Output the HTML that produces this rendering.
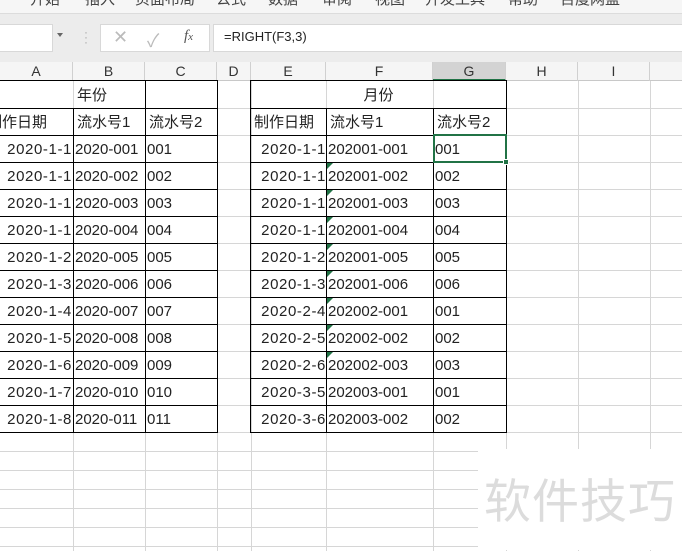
<!DOCTYPE html>
<html><head><meta charset="utf-8"><style>
*{margin:0;padding:0;box-sizing:border-box}
body{width:682px;height:550px;overflow:hidden;background:#fff;position:relative;font-family:"Liberation Sans","Noto Sans CJK SC",sans-serif;}
.a{position:absolute}
.t{font-size:15px;color:#222;line-height:29px;white-space:nowrap}
.vl{position:absolute;width:1px;background:#d6d6d6}
.hl{position:absolute;height:1px;background:#d6d6d6}
.ch{position:absolute;top:62px;height:19px;font-size:14px;color:#333;text-align:center;line-height:19px;border-right:1px solid #d0d0d0}
.tri{position:absolute;width:0;height:0;border-top:6px solid #217346;border-right:6px solid transparent}
</style></head><body>
<div class="a" style="left:0;top:0;width:682px;height:62px;background:#ececec"></div>
<div class="a" style="left:0;top:0;width:682px;height:14px;background:#f6f6f6;border-bottom:1px solid #dcdcdc;overflow:hidden;font-size:15px;color:#444">
<span class="a" style="left:30px;top:-12px">开始</span><span class="a" style="left:85px;top:-12px">插入</span><span class="a" style="left:135px;top:-12px">页面布局</span><span class="a" style="left:216px;top:-12px">公式</span><span class="a" style="left:268px;top:-12px">数据</span><span class="a" style="left:322px;top:-12px">审阅</span><span class="a" style="left:375px;top:-12px">视图</span><span class="a" style="left:425px;top:-12px">开发工具</span><span class="a" style="left:508px;top:-12px">帮助</span><span class="a" style="left:560px;top:-12px">百度网盘</span></div>
<div class="a" style="left:0;top:24px;width:53px;height:28px;background:#fff;border:1px solid #d8d8d8;border-left:none"></div>
<div class="a" style="left:57px;top:33px;border-top:4px solid #666;border-left:3px solid transparent;border-right:3px solid transparent"></div>
<div class="a" style="left:84px;top:30px;font-size:12px;color:#aaa;line-height:5px">·<br>·<br>·</div>
<div class="a" style="left:100px;top:24px;width:110px;height:28px;background:#fff;border:1px solid #d8d8d8"></div>
<div class="a" style="left:113px;top:27px;font-size:18px;color:#bbb">✕</div>
<div class="a" style="left:147px;top:27px;font-size:18px;color:#bbb">✓</div>
<div class="a" style="left:184px;top:28px;font-size:15px;color:#555;font-style:italic;font-family:'Liberation Serif',serif">f<span style="font-size:11px">x</span></div>
<div class="a" style="left:213px;top:24px;width:469px;height:28px;background:#fff;border:1px solid #d8d8d8;border-right:none"></div>
<div class="a" style="left:224px;top:29px;font-size:13px;color:#222">=RIGHT(F3,3)</div>
<div class="a" style="left:0;top:62px;width:682px;height:19px;background:#f5f5f5;border-bottom:1px solid #c8c8c8"></div>
<div class="ch" style="left:0;width:73px">A</div><div class="ch" style="left:73px;width:72px">B</div><div class="ch" style="left:145px;width:72px">C</div><div class="ch" style="left:217px;width:34px">D</div><div class="ch" style="left:251px;width:75px">E</div><div class="ch" style="left:326px;width:107px">F</div><div class="ch" style="left:433px;width:73px;background:#d3d3d3;border-bottom:2px solid #217346">G</div><div class="ch" style="left:506px;width:72px">H</div><div class="ch" style="left:578px;width:72px">I</div>
<div id="g"></div>
<div class="a" style="left:478px;top:449px;width:204px;height:101px;background:#fff"></div>
<div class="a" style="left:484px;top:468px;font-size:47px;color:#dcdcdc;letter-spacing:1px;font-family:'Noto Sans CJK SC',sans-serif;line-height:60px">软件技巧</div>
<script>
var h='';
var cols=[73,145,217,251,326,433,506,578,650];
var rows=[];for(var y=108;y<=432;y+=27)rows.push(y);for(var y=451;y<560;y+=19)rows.push(y);
cols.forEach(function(x){h+='<div class="vl" style="left:'+x+'px;top:81px;height:470px"></div>'});
rows.forEach(function(y){h+='<div class="hl" style="left:0;top:'+y+'px;width:682px"></div>'});
function box(l,r){h+='<div class="a" style="left:'+(l-1)+'px;top:80px;width:'+(r-l+2)+'px;height:353px;border:1px solid #000"></div>';
for(var y=108;y<432;y+=27)h+='<div class="a" style="left:'+l+'px;top:'+y+'px;width:'+(r-l)+'px;height:1px;background:#000"></div>';}
box(0,217);box(251,506);
[73,145,326,433].forEach(function(x){h+='<div class="a" style="left:'+x+'px;top:108px;width:1px;height:324px;background:#000"></div>'});
h+='<div class="a" style="left:145px;top:81px;width:1px;height:27px;background:#000"></div>';
function t(x,y,s,al,w){h+='<div class="a t" style="left:'+x+'px;top:'+y+'px;'+(w?'width:'+w+'px;text-align:'+al:'')+'">'+s+'</div>'}
t(77,81,'年份');t(251,81,'月份','center',255);
t(-13,108,'制作日期');t(77,108,'流水号1');t(149,108,'流水号2');t(254,108,'制作日期');t(330,108,'流水号1');t(437,108,'流水号2');
var A=['2020-1-1','2020-1-1','2020-1-1','2020-1-1','2020-1-2','2020-1-3','2020-1-4','2020-1-5','2020-1-6','2020-1-7','2020-1-8'];
var E=['2020-1-1','2020-1-1','2020-1-1','2020-1-1','2020-1-2','2020-1-3','2020-2-4','2020-2-5','2020-2-6','2020-3-5','2020-3-6'];
var F=['202001-001','202001-002','202001-003','202001-004','202001-005','202001-006','202002-001','202002-002','202002-003','202003-001','202003-002'];
var G=['001','002','003','004','005','006','001','002','003','001','002'];
for(var i=0;i<11;i++){var y=135+i*27;
t(-4,y,'<span style="letter-spacing:0.6px">'+A[i]+'</span>','right',76);var n=('00'+(i+1)).slice(-3);t(75,y,'2020-'+n);t(147,y,n);
t(247,y,'<span style="letter-spacing:0.6px">'+E[i]+'</span>','right',79);t(328,y,F[i]);t(435,y,G[i]);
if(i>=1&&i<=8)h+='<div class="tri" style="left:327px;top:'+(y+1)+'px"></div>';}
h+='<div class="a" style="left:433px;top:134px;width:74px;height:29px;border:2px solid #217346"></div><div class="a" style="left:503px;top:159px;width:6px;height:6px;background:#217346;border:1px solid #fff"></div>';
document.getElementById('g').innerHTML=h;
</script>
</body></html>
